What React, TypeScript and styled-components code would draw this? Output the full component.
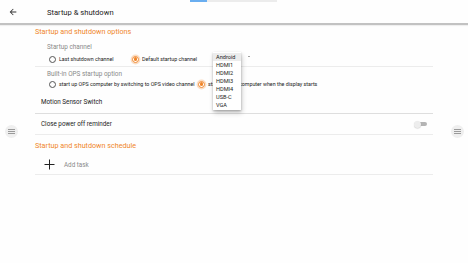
import React from "react";
import styled, { createGlobalStyle } from "styled-components";

const GlobalStyle = createGlobalStyle`
  html, body { margin: 0; padding: 0; background: #fefefe; }
  body { font-family: Roboto, "Liberation Sans", Arial, sans-serif; width: 468px; height: 263px; overflow: hidden; }
  * { box-sizing: border-box; }
`;

const ORANGE = "#f0862a";

const Page = styled.div`
  position: relative;
  width: 468px;
  height: 263px;
  background: #fefefe;
`;

const ScrollIndicator = styled.div`
  position: absolute;
  top: 0;
  left: 190px;
  width: 87px;
  height: 1.5px;
  background: #ececec;
  &::before {
    content: "";
    position: absolute;
    left: 0;
    top: 0;
    width: 17px;
    height: 100%;
    background: #6aaef0;
  }
`;

const Header = styled.header`
  height: 25px;
  display: flex;
  align-items: center;
  padding: 1px 0 0 8px;
  border-bottom: 2px solid #c2c2c2;
  box-shadow: 0 1px 1px rgba(0, 0, 0, 0.06);
`;

const BackButton = styled.button`
  width: 10px;
  height: 10px;
  padding: 0;
  border: 0;
  background: none;
  display: flex;
  align-items: center;
  justify-content: center;
`;

const Title = styled.h1`
  margin: 0 0 0 29px;
  font-size: 7.6px;
  font-weight: 400;
  color: #222;
`;

const Content = styled.main`
  margin-left: 35px;
  width: 398px;
  display: flex;
  flex-direction: column;
`;

const SectionTitle = styled.h2<{ $h: number }>`
  margin: 0;
  height: ${(p) => p.$h}px;
  display: flex;
  align-items: center;
  font-size: 7.2px;
  font-weight: 400;
  color: ${ORANGE};
`;

const OptionGroup = styled.section<{ $pt: number; $pb: number; $line?: boolean }>`
  padding: ${(p) => p.$pt}px 0 ${(p) => p.$pb}px 12px;
  border-bottom: ${(p) => (p.$line ? "1px solid #ececec" : "0")};
`;

const GroupLabel = styled.div<{ $h: number }>`
  height: ${(p) => p.$h}px;
  display: flex;
  align-items: center;
  font-size: 6.4px;
  color: #8a8a8a;
`;

const RadioRow = styled.div<{ $h: number }>`
  height: ${(p) => p.$h}px;
  display: flex;
  align-items: center;
  padding-left: 2px;
`;

const RadioItem = styled.label<{ $w?: number }>`
  display: flex;
  align-items: center;
  gap: 3px;
  font-size: 5.3px;
  color: #222;
  white-space: nowrap;
  ${(p) => (p.$w ? `width: ${p.$w}px;` : "")}
`;

const RadioCircle = styled.span<{ $checked?: boolean }>`
  width: 7px;
  height: 7px;
  border-radius: 50%;
  border: 0.9px solid ${(p) => (p.$checked ? ORANGE : "#555")};
  display: flex;
  align-items: center;
  justify-content: center;
  flex: none;
  ${(p) => (p.$checked ? `box-shadow: 0 0 0 1.4px rgba(245, 160, 90, 0.35);` : "")}
  &::after {
    content: "";
    width: 3.4px;
    height: 3.4px;
    border-radius: 50%;
    background: ${(p) => (p.$checked ? ORANGE : "transparent")};
  }
`;

const SettingRow = styled.div<{ $h: number; $mt?: number; $line?: string }>`
  height: ${(p) => p.$h}px;
  margin-top: ${(p) => p.$mt ?? 0}px;
  display: flex;
  align-items: center;
  justify-content: space-between;
  padding: 0 6px;
  border-bottom: 1px solid ${(p) => p.$line ?? "#ececec"};
  font-size: 6.3px;
  color: #222;
`;

const Toggle = styled.span`
  position: relative;
  width: 13px;
  height: 7px;
  display: inline-block;
  &::before {
    content: "";
    position: absolute;
    left: 3px;
    right: 0;
    top: 1.5px;
    height: 4px;
    border-radius: 2px;
    background: #b4b4b4;
  }
  &::after {
    content: "";
    position: absolute;
    left: 0;
    top: 0;
    width: 7px;
    height: 7px;
    border-radius: 50%;
    background: #ededed;
    box-shadow: 0 0.5px 1px rgba(0, 0, 0, 0.2);
  }
`;

const AddRow = styled.div`
  height: 20px;
  display: flex;
  align-items: center;
  padding-left: 9px;
  gap: 9px;
  border-bottom: 1px solid #ececec;
  font-size: 6.3px;
  color: #8a8a8a;
`;

const Spinner = styled.div`
  position: absolute;
  left: 213px;
  top: 52px;
  display: flex;
  align-items: flex-start;
  gap: 7px;
`;

const Popup = styled.ul`
  margin: 0;
  padding: 1px 0;
  list-style: none;
  width: 28px;
  background: #fff;
  box-shadow: 0 1px 2px rgba(0, 0, 0, 0.25), 1px 3px 5px rgba(0, 0, 0, 0.2);
`;

const PopupItem = styled.li<{ $active?: boolean }>`
  height: 8px;
  padding-left: 3px;
  display: flex;
  align-items: center;
  font-size: 5.6px;
  color: #222;
  background: ${(p) => (p.$active ? "#ececec" : "transparent")};
`;

const Caret = styled.span`
  margin-top: 4px;
  width: 0;
  height: 0;
  border-left: 1.6px solid transparent;
  border-right: 1.6px solid transparent;
  border-top: 1.8px solid #444;
`;

const SideHandle = styled.div<{ $side: "left" | "right" }>`
  position: absolute;
  top: 125px;
  ${(p) => (p.$side === "left" ? "left: 4.5px;" : "right: 4.5px;")}
  width: 13px;
  height: 13px;
  border-radius: 50%;
  background: #efefef;
  display: flex;
  flex-direction: column;
  align-items: center;
  justify-content: center;
  gap: 1.2px;
  & > i {
    display: block;
    width: 7px;
    height: 0.8px;
    background: #9a9a9a;
  }
`;

const channels = ["Android", "HDMI1", "HDMI2", "HDMI3", "HDMI4", "USB-C", "VGA"];

export default function App() {
  return (
    <Page>
      <GlobalStyle />
      <ScrollIndicator />
      <Header>
        <BackButton aria-label="Back">
          <svg width="10" height="10" viewBox="0 0 24 24">
            <path d="M20 11H7.83l5.59-5.59L12 4l-8 8 8 8 1.41-1.41L7.83 13H20v-2z" fill="#333" />
          </svg>
        </BackButton>
        <Title>Startup &amp; shutdown</Title>
      </Header>
      <Content>
        <SectionTitle $h={13}>Startup and shutdown options</SectionTitle>
        <OptionGroup $pt={3} $pb={1} $line>
          <GroupLabel $h={12}>Startup channel</GroupLabel>
          <RadioRow $h={12}>
            <RadioItem $w={83}>
              <RadioCircle />
              Last shutdown channel
            </RadioItem>
            <RadioItem>
              <RadioCircle $checked />
              Default startup channel
            </RadioItem>
          </RadioRow>
        </OptionGroup>
        <OptionGroup $pt={2} $pb={0}>
          <GroupLabel $h={10}>Built-in OPS startup option</GroupLabel>
          <RadioRow $h={10}>
            <RadioItem $w={149}>
              <RadioCircle />
              start up OPS computer by switching to OPS video channel
            </RadioItem>
            <RadioItem>
              <RadioCircle $checked />
              start up OPS computer when the display starts
            </RadioItem>
          </RadioRow>
        </OptionGroup>
        <SettingRow $h={24} $mt={1} $line="#dedede">
          Motion Sensor Switch
        </SettingRow>
        <SettingRow $h={21}>
          Close power off reminder
          <Toggle />
        </SettingRow>
        <SectionTitle $h={20}>Startup and shutdown schedule</SectionTitle>
        <AddRow>
          <svg width="11" height="11" viewBox="0 0 11 11">
            <path d="M5.5 0.5v10M0.5 5.5h10" stroke="#222" strokeWidth="1" />
          </svg>
          Add task
        </AddRow>
      </Content>
      <Spinner>
        <Popup>
          {channels.map((c, i) => (
            <PopupItem key={c} $active={i === 0}>
              {c}
            </PopupItem>
          ))}
        </Popup>
        <Caret />
      </Spinner>
      <SideHandle $side="left">
        <i />
        <i />
        <i />
      </SideHandle>
      <SideHandle $side="right">
        <i />
        <i />
        <i />
      </SideHandle>
    </Page>
  );
}
